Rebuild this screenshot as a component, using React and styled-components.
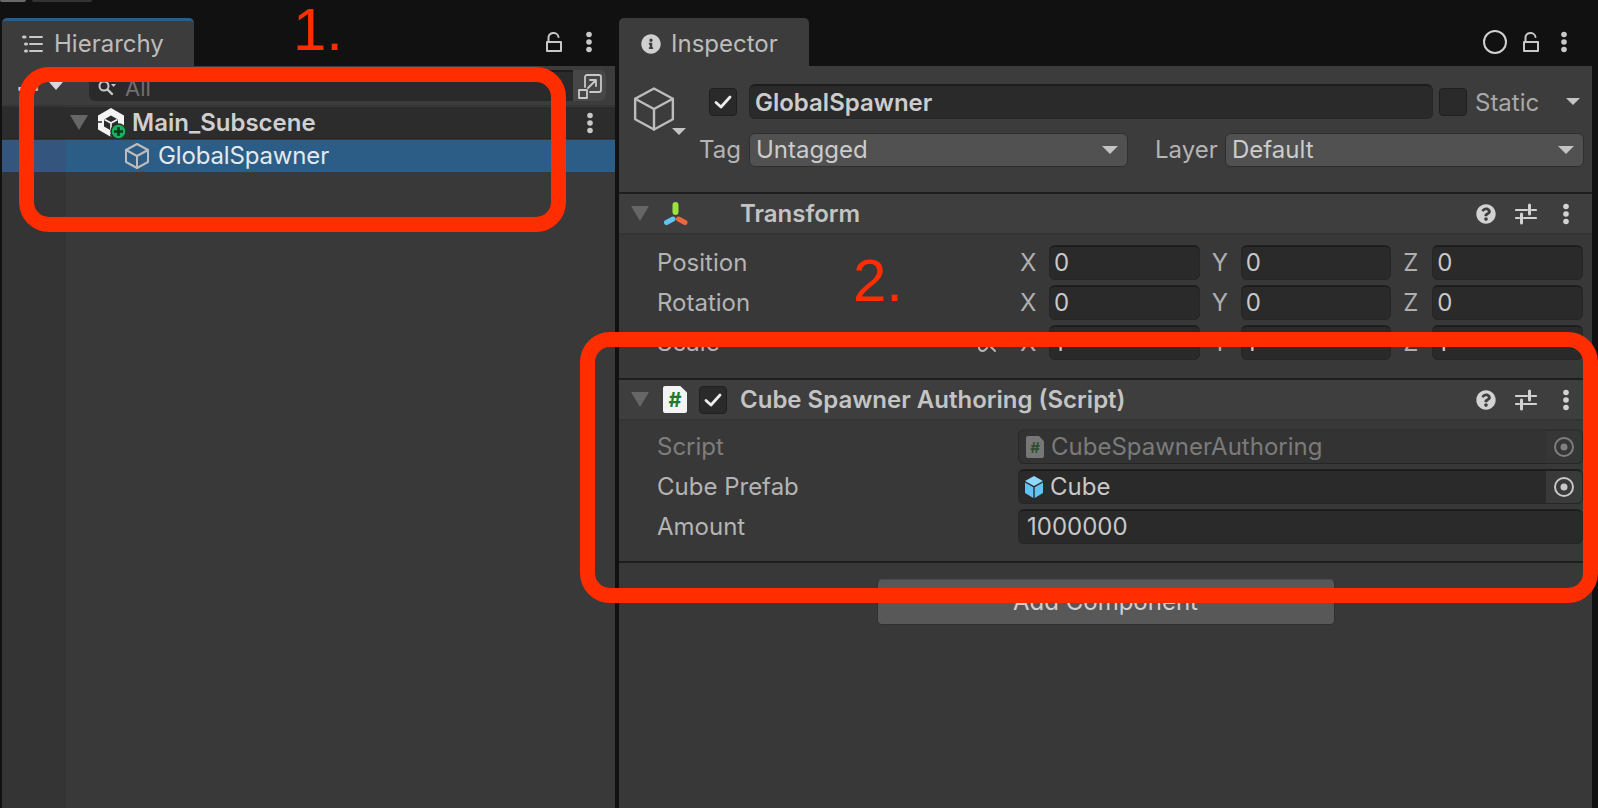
import React from "react";
import styled, { createGlobalStyle } from "styled-components";
import { FaInfoCircle, FaQuestionCircle } from "react-icons/fa";

const GlobalStyle = createGlobalStyle`
  html, body {
    margin: 0;
    height: 100%;
    background: #111111;
    overflow: hidden;
  }
  * { box-sizing: border-box; }
  #root { height: 100%; }
`;

const Page = styled.div`
  position: relative;
  width: 1598px;
  height: 808px;
  display: flex;
  gap: 4px;
  padding: 18px 6px 0 2px;
  font-family: Inter, "Noto Sans", sans-serif;
  font-size: 24px;
  line-height: 1;
  color: #c4c4c4;
  overflow: hidden;
`;

const WindowChrome = styled.div`
  position: absolute;
  top: 0;
  left: 0;
  display: flex;
  gap: 6px;
`;

const ChromeTab = styled.div`
  width: ${({ $w }) => $w}px;
  height: 2px;
  border-radius: 0 0 3px 3px;
  background: ${({ $light }) => ($light ? "#6a6a6a" : "#333333")};
`;

const Panel = styled.section`
  width: ${({ $w }) => $w}px;
  display: flex;
  flex-direction: column;
`;

const PanelHead = styled.header`
  height: 48px;
  flex: none;
  display: flex;
  align-items: center;
  justify-content: space-between;
`;

const Tab = styled.div`
  width: ${({ $w }) => $w}px;
  height: 48px;
  display: flex;
  align-items: center;
  gap: ${({ $gap }) => $gap}px;
  padding: ${({ $active }) => ($active ? "0" : "4px")} 0 0 ${({ $pad }) => $pad}px;
  background: #3c3c3c;
  border-radius: 5px 5px 0 0;
  border-top: ${({ $active }) => ($active ? "3px solid #2c5d87" : "0")};
  color: #bdbdbd;
`;

const HeadActions = styled.div`
  display: flex;
  align-items: center;
  gap: ${({ $gap }) => $gap}px;
  padding-right: ${({ $pad }) => $pad}px;
`;

const Tree = styled.div`
  flex: 1;
  background: linear-gradient(to right, #343434 64px, #393939 64px);
`;

const SearchBar = styled.div`
  height: 40px;
  display: flex;
  align-items: center;
  padding: 4px 9px 4px 14px;
  background: #3c3c3c;
  border-bottom: 1px solid #333333;
`;

const CreateMenu = styled.div`
  width: 73px;
  display: flex;
  align-items: center;
  gap: 9px;
  color: #d0d0d0;
`;

const PlusGlyph = styled.span`
  width: 24px;
  display: flex;
  justify-content: center;
  font-size: 40px;
  font-weight: 500;
`;

const SearchField = styled.div`
  flex: 1;
  height: 31px;
  display: flex;
  align-items: center;
  gap: 8px;
  padding: 3px 0 0 8px;
  background: #2a2a2a;
  border-radius: 6px 0 0 6px;
  border-top: 2px solid #1d1d1d;
  color: #6f6f6f;
  font-size: 22px;
`;

const SearchToggle = styled.div`
  width: 33px;
  height: 31px;
  display: flex;
  align-items: center;
  justify-content: center;
  background: #474747;
  border-radius: 0 6px 6px 0;
`;

const SceneRow = styled.div`
  height: 32px;
  margin-top: 1px;
  display: flex;
  align-items: center;
  justify-content: space-between;
  padding: 0 21px 0 68px;
  background: #2c2c2c;
  font-weight: 600;
  color: #cfcfcf;
  border-bottom: 1px solid #262626;
`;

const RowStart = styled.div`
  display: flex;
  align-items: center;
  gap: ${({ $gap }) => $gap}px;
`;

const SelectedRow = styled.div`
  height: 32px;
  margin-top: 1px;
  display: flex;
  align-items: center;
  gap: 7px;
  padding: 0 0 1px 121px;
  background: linear-gradient(to right, #34557d 64px, #2c5d87 64px);
  color: #e4e9ee;
  letter-spacing: -0.15px;
`;

const Inspector = styled.div`
  flex: 1;
  background: #383838;
`;

const ObjectHead = styled.div`
  height: 128px;
  display: flex;
  padding: 18px 8px 0 15px;
  background: #3c3c3c;
  border-bottom: 2px solid #1e1e1e;
`;

const ObjectIcon = styled.div`
  width: 65px;
  flex: none;
  display: flex;
  align-items: flex-start;
  padding-top: 1px;
`;

const ObjectCube = styled.span`
  margin-left: -4px;
  flex: none;
`;

const ObjectMenu = styled.span`
  flex: none;
  margin: 43px 0 0 -6px;
`;

const ObjectFields = styled.div`
  flex: 1;
  display: flex;
  flex-direction: column;
  gap: 14px;
`;

const ObjectRow = styled.div`
  display: flex;
  align-items: center;
  padding-left: ${({ $pad }) => $pad || 0}px;
`;

const CheckBox = styled.div`
  width: 28px;
  height: 28px;
  flex: none;
  display: flex;
  align-items: center;
  justify-content: center;
  background: #2a2a2a;
  border: 1px solid #1f1f1f;
  border-radius: 4px;
  margin: ${({ $margin }) => $margin || "0"};
`;

const NameField = styled.div`
  width: 684px;
  height: 35px;
  display: flex;
  align-items: center;
  padding: 2px 0 0 5px;
  background: #2a2a2a;
  border: 1px solid #262626;
  border-top: 2px solid #1c1c1c;
  border-radius: 6px;
  font-weight: 600;
  color: #cdcdcd;
`;

const StaticLabel = styled.span`
  width: 99px;
  padding: 2px 0 0 8px;
  color: #a9a9a9;
`;

const FieldLabel = styled.span`
  flex: none;
  width: ${({ $w }) => $w}px;
  margin-left: ${({ $ml }) => $ml || 0}px;
  color: ${({ $muted }) => ($muted ? "#7d7d7d" : "#b4b4b4")};
`;

const LabelCell = styled.div`
  display: flex;
  align-items: center;
  justify-content: space-between;
  padding-right: 21px;
`;

const Dropdown = styled.div`
  width: ${({ $w }) => $w}px;
  height: 34px;
  display: flex;
  align-items: center;
  justify-content: space-between;
  padding: 0 9px 0 6px;
  background: #515151;
  border: 1px solid #2f2f2f;
  border-radius: 6px;
  color: #cccccc;
`;

const Arrow = styled.span`
  display: block;
  width: 0;
  height: 0;
  flex: none;
  border-left: ${({ $s = 8 }) => $s}px solid transparent;
  border-right: ${({ $s = 8 }) => $s}px solid transparent;
  border-top: ${({ $h, $s = 8 }) => $h || $s}px solid ${({ $c = "#c4c4c4" }) => $c};
`;

const ComponentHead = styled.div`
  height: 41px;
  display: flex;
  align-items: center;
  padding: 0 22px 0 12px;
  background: #3e3e3e;
  border-bottom: 2px solid #343434;
  font-weight: 600;
  color: #c4c4c4;
`;

const HeadIcons = styled.div`
  width: 64px;
  flex: none;
  margin-left: 14px;
  display: flex;
  align-items: center;
  gap: 12px;
`;

const HeadTitle = styled.span`
  flex: 1;
  margin-left: 13px;
`;

const ComponentActions = styled.div`
  display: flex;
  align-items: center;
  gap: 19px;
  color: #d2d2d2;
`;

const MenuSlot = styled.span`
  margin-left: 6px;
`;

const ComponentBody = styled.div`
  display: flex;
  flex-direction: column;
  gap: 5px;
  padding: ${({ $pad }) => $pad};
  border-bottom: 2px solid #1e1e1e;
`;

const PropRow = styled.div`
  height: 35px;
  display: grid;
  grid-template-columns: 361px 565px;
  align-items: center;
  padding-left: 38px;
`;

const VectorFields = styled.div`
  display: flex;
  gap: 10px;
`;

const VectorAxis = styled.div`
  flex: 1;
  display: flex;
  align-items: center;
`;

const AxisLabel = styled.span`
  width: 31px;
  flex: none;
  padding-left: 2px;
  color: #b0b0b0;
`;

const ValueField = styled.div`
  flex: 1;
  height: 35px;
  display: flex;
  align-items: center;
  gap: ${({ $gap = 6 }) => $gap}px;
  padding-left: ${({ $pad = 4 }) => $pad}px;
  background: ${({ $disabled }) => ($disabled ? "#333333" : "#2a2a2a")};
  border: 1px solid #262626;
  border-top: 2px solid ${({ $disabled }) => ($disabled ? "#303030" : "#1e1e1e")};
  border-radius: 6px;
  color: ${({ $disabled }) => ($disabled ? "#7b7b7b" : "#c8c8c8")};
  overflow: hidden;
`;

const ObjectValue = styled.span`
  flex: 1;
`;

const Picker = styled.div`
  width: 36px;
  height: 100%;
  flex: none;
  display: flex;
  align-items: center;
  justify-content: center;
  background: ${({ $disabled }) => ($disabled ? "#363636" : "#3a3a3a")};
`;

const ScriptGlyph = styled.span`
  width: ${({ $w }) => $w}px;
  height: ${({ $h }) => $h}px;
  flex: none;
  display: flex;
  align-items: center;
  justify-content: center;
  background: ${({ $dim }) => ($dim ? "#777777" : "#f4f4f4")};
  clip-path: polygon(0 0, 72% 0, 100% 24%, 100% 100%, 0 100%);
  border-radius: 2px;
  font-weight: 700;
  font-size: ${({ $fs }) => $fs}px;
  color: ${({ $dim }) => ($dim ? "#2d4f2f" : "#1d7a2f")};
`;

const AddWrap = styled.div`
  display: flex;
  justify-content: center;
  padding-top: 16px;
`;

const AddButton = styled.div`
  width: 458px;
  height: 46px;
  display: flex;
  align-items: center;
  justify-content: center;
  background: #585858;
  border: 1px solid #303030;
  border-top-color: #4a4a4a;
  border-radius: 5px;
  color: #d0d0d0;
`;

/* the red marks lie over the screenshot, they are not part of the panels */
const Ring = styled.div`
  position: absolute;
  left: ${({ $x }) => $x}px;
  top: ${({ $y }) => $y}px;
  width: ${({ $w }) => $w}px;
  height: ${({ $h }) => $h}px;
  border: 15px solid #ff2d00;
  border-radius: 30px;
`;

const Mark = styled.span`
  position: absolute;
  left: ${({ $x }) => $x}px;
  top: ${({ $y }) => $y}px;
  font-family: "Liberation Sans", Arial, sans-serif;
  font-size: 60px;
  line-height: 1;
  color: #ff2d00;
`;

const Stroke = ({ w = 24, h = 24, vb, sw = 2, c = "#c8c8c8", children }) => (
  <svg
    width={w}
    height={h}
    viewBox={vb || `0 0 ${w} ${h}`}
    fill="none"
    stroke={c}
    strokeWidth={sw}
    strokeLinecap="round"
    strokeLinejoin="round"
    style={{ display: "block", flex: "none" }}
  >
    {children}
  </svg>
);

const ListIcon = () => (
  <Stroke w={22} h={20}>
    <path d="M8 3h12M8 10h12M8 17h12" />
    <path d="M1.500 3h1.500M3.500 10h1M3.500 17h1" strokeWidth="3" />
  </Stroke>
);

const LockIcon = () => (
  <Stroke w={18} h={22}>
    <rect x="2" y="11" width="14" height="9" />
    <path d="M3.500 11V7a5 4.500 0 0 1 10-1" />
  </Stroke>
);

const Kebab = ({ c = "#c8c8c8" }) => (
  <svg width="8" height="22" viewBox="0 0 8 22" style={{ display: "block", flex: "none" }}>
    <circle cx="4" cy="3.500" r="2.800" fill={c} />
    <circle cx="4" cy="11" r="2.800" fill={c} />
    <circle cx="4" cy="18.500" r="2.800" fill={c} />
  </svg>
);

const CubeIcon = ({ size = 28, sw = 2, c = "#bdbdbd" }) => (
  <Stroke w={size} h={size} vb="0 0 28 28" sw={sw} c={c}>
    <path d="M14 2 25 8v12l-11 6-11-6V8z" />
    <path d="M3 8l11 6 11-6M14 14v12" />
  </Stroke>
);

const SearchIcon = () => (
  <Stroke w={20} h={20} c="#c8c8c8">
    <circle cx="7" cy="8" r="4.500" />
    <path d="M10.500 11.500 15 16" strokeWidth="2.400" />
    <path d="M14 6h5l-2.500 3z" fill="#c8c8c8" strokeWidth="0" />
  </Stroke>
);

const ToggleIcon = () => (
  <Stroke w={26} h={28} sw={1.800}>
    <path d="M8 15V5a2 2 0 0 1 2-2h12a2 2 0 0 1 2 2v13a2 2 0 0 1-2 2h-9" />
    <rect x="2" y="18" width="8" height="8" />
    <path d="M11 16l8-8M13 8h6v6" />
  </Stroke>
);

const SceneIcon = () => (
  <svg width="30" height="32" viewBox="0 0 30 32" style={{ display: "block", flex: "none" }}>
    <path d="M13 1 26 8.500v14L13 30 0 22.500v-14z" fill="#f4f4f4" />
    <path d="M13 8.500 20 12.500v7l-7 4-7-4v-7z" fill="#2c2c2c" />
    <path d="M6.500 12.500 13 16l6.500-3.500M13 16v7" stroke="#f4f4f4" strokeWidth="1.600" fill="none" />
    <path d="M0 15h4M13 30v-3" stroke="#2c2c2c" strokeWidth="1.500" />
    <circle cx="20.500" cy="24.500" r="7.500" fill="#17b35c" stroke="#20362a" strokeWidth="1.500" />
    <path d="M20.500 20v9M16 24.500h9" stroke="#12331f" strokeWidth="2.600" />
  </svg>
);

const CheckMark = () => (
  <Stroke w={18} h={16} sw={2.800} c="#ececec">
    <path d="M2 8.500 7 13 16 3" />
  </Stroke>
);

const TransformIcon = () => (
  <svg width="26" height="24" viewBox="0 0 26 24" style={{ display: "block", flex: "none" }}>
    <path d="M12.500 3v7" stroke="#9be23a" strokeWidth="6" strokeLinecap="round" />
    <path d="M3.500 20.500 10 17" stroke="#62c4f2" strokeWidth="5" strokeLinecap="round" />
    <path d="M15.500 17l6.500 3.500" stroke="#f0673c" strokeWidth="5" strokeLinecap="round" />
  </svg>
);

const SlidersIcon = () => (
  <Stroke w={22} h={22} sw={2.200} c="#d2d2d2">
    <path d="M1 7h11M17 7h4M1 15h3M9 15h12" />
    <path d="M14.500 2v9M6.500 11v9" strokeWidth="3" />
  </Stroke>
);

const TargetIcon = ({ c = "#c8c8c8" }) => (
  <svg width="22" height="22" viewBox="0 0 22 22" style={{ display: "block" }}>
    <circle cx="11" cy="11" r="9" fill="none" stroke={c} strokeWidth="2" />
    <circle cx="11" cy="11" r="3.500" fill={c} />
  </svg>
);

const PrefabIcon = () => (
  <svg width="20" height="24" viewBox="0 0 20 24" style={{ display: "block", flex: "none" }}>
    <path d="M10 1 19 6l-9 5-9-5z" fill="#8fd8fb" />
    <path d="M1 7.500l8.300 4.700V23L1 18z" fill="#62c3f2" />
    <path d="M19 7.500l-8.300 4.700V23L19 18z" fill="#62c3f2" />
  </svg>
);

const CircleOutline = () => (
  <svg width="26" height="26" viewBox="0 0 26 26" style={{ display: "block" }}>
    <circle cx="13" cy="13" r="11" fill="none" stroke="#d0d0d0" strokeWidth="2" />
  </svg>
);

const LinkIcon = () => (
  <Stroke w={20} h={20} c="#b4b4b4">
    <path d="M8 5l2-2a3.500 3.500 0 0 1 5 5l-2 2" />
    <path d="M10 15l-2 2a3.500 3.500 0 0 1-5-5l2-2" />
    <path d="M3 3l15 15" />
  </Stroke>
);

const vectorRows = [
  { label: "Position", value: "0" },
  { label: "Rotation", value: "0" },
  { label: "Scale", value: "1", linked: true },
];

const Hierarchy = () => (
  <Panel $w={613}>
    <PanelHead>
      <Tab $w={192} $pad={20} $gap={10} $active>
        <ListIcon />
        Hierarchy
      </Tab>
      <HeadActions $gap={22} $pad={22}>
        <LockIcon />
        <Kebab />
      </HeadActions>
    </PanelHead>
    <SearchBar>
      <CreateMenu>
        <PlusGlyph>+</PlusGlyph>
        <Arrow $s={7} $h={8} $c="#d8d8d8" />
      </CreateMenu>
      <SearchField>
        <SearchIcon />
        All
      </SearchField>
      <SearchToggle>
        <ToggleIcon />
      </SearchToggle>
    </SearchBar>
    <Tree>
      <SceneRow>
        <RowStart $gap={10}>
          <Arrow $s={9} $h={15} $c="#666666" />
          <RowStart $gap={4}>
            <SceneIcon />
            Main_Subscene
          </RowStart>
        </RowStart>
        <Kebab />
      </SceneRow>
      <SelectedRow>
        <CubeIcon />
        GlobalSpawner
      </SelectedRow>
    </Tree>
  </Panel>
);

const ComponentMenu = () => (
  <ComponentActions>
    <FaQuestionCircle size={20} />
    <SlidersIcon />
    <MenuSlot>
      <Kebab c="#d2d2d2" />
    </MenuSlot>
  </ComponentActions>
);

const InspectorPanel = () => (
  <Panel $w={973}>
    <PanelHead>
      <Tab $w={190} $pad={22} $gap={10}>
        <FaInfoCircle size={20} color="#cfcfcf" />
        Inspector
      </Tab>
      <HeadActions $gap={14} $pad={24}>
        <CircleOutline />
        <LockIcon />
        <MenuSlot>
          <Kebab />
        </MenuSlot>
      </HeadActions>
    </PanelHead>
    <Inspector>
      <ObjectHead>
        <ObjectIcon>
          <ObjectCube>
            <CubeIcon size={48} sw={1.400} />
          </ObjectCube>
          <ObjectMenu>
            <Arrow $s={7} />
          </ObjectMenu>
        </ObjectIcon>
        <ObjectFields>
          <ObjectRow $pad={10}>
            <CheckBox $margin="0 12px 0 0">
              <CheckMark />
            </CheckBox>
            <NameField>GlobalSpawner</NameField>
            <CheckBox $margin="0 0 0 6px" />
            <StaticLabel>Static</StaticLabel>
            <Arrow $s={7} />
          </ObjectRow>
          <ObjectRow>
            <FieldLabel $w={50}>Tag</FieldLabel>
            <Dropdown $w={379}>
              Untagged
              <Arrow $s={8} />
            </Dropdown>
            <FieldLabel $w={70} $ml={27}>
              Layer
            </FieldLabel>
            <Dropdown $w={359}>
              Default
              <Arrow $s={8} />
            </Dropdown>
          </ObjectRow>
        </ObjectFields>
      </ObjectHead>

      <ComponentHead>
        <Arrow $s={9} $h={15} $c="#666666" />
        <HeadIcons>
          <TransformIcon />
        </HeadIcons>
        <HeadTitle>Transform</HeadTitle>
        <ComponentMenu />
      </ComponentHead>
      <ComponentBody $pad="10px 0 18px">
        {vectorRows.map((row) => (
          <PropRow key={row.label}>
            <LabelCell>
              <FieldLabel>{row.label}</FieldLabel>
              {row.linked && <LinkIcon />}
            </LabelCell>
            <VectorFields>
              {["X", "Y", "Z"].map((axis) => (
                <VectorAxis key={axis}>
                  <AxisLabel>{axis}</AxisLabel>
                  <ValueField>{row.value}</ValueField>
                </VectorAxis>
              ))}
            </VectorFields>
          </PropRow>
        ))}
      </ComponentBody>

      <ComponentHead>
        <Arrow $s={9} $h={15} $c="#666666" />
        <HeadIcons>
          <ScriptGlyph $w={24} $h={27} $fs={20}>
            #
          </ScriptGlyph>
          <CheckBox>
            <CheckMark />
          </CheckBox>
        </HeadIcons>
        <HeadTitle>Cube Spawner Authoring (Script)</HeadTitle>
        <ComponentMenu />
      </ComponentHead>
      <ComponentBody $pad="8px 0 17px">
        <PropRow>
          <FieldLabel $muted>Script</FieldLabel>
          <ValueField $disabled $pad={7} $gap={7}>
            <ScriptGlyph $w={18} $h={22} $fs={15} $dim>
              #
            </ScriptGlyph>
            <ObjectValue>CubeSpawnerAuthoring</ObjectValue>
            <Picker $disabled>
              <TargetIcon c="#7f7f7f" />
            </Picker>
          </ValueField>
        </PropRow>
        <PropRow>
          <FieldLabel>Cube Prefab</FieldLabel>
          <ValueField $pad={5}>
            <PrefabIcon />
            <ObjectValue>Cube</ObjectValue>
            <Picker>
              <TargetIcon />
            </Picker>
          </ValueField>
        </PropRow>
        <PropRow>
          <FieldLabel>Amount</FieldLabel>
          <ValueField $pad={8}>1000000</ValueField>
        </PropRow>
      </ComponentBody>

      <AddWrap>
        <AddButton>Add Component</AddButton>
      </AddWrap>
    </Inspector>
  </Panel>
);

export default function App() {
  return (
    <>
      <GlobalStyle />
      <Page>
        <WindowChrome>
          <ChromeTab $w={26} $light />
          <ChromeTab $w={60} />
        </WindowChrome>
        <Hierarchy />
        <InspectorPanel />
        <Ring $x={19} $y={67} $w={547} $h={165} />
        <Ring $x={580} $y={332} $w={1018} $h={271} />
        <Mark $x={293} $y={0}>
          1.
        </Mark>
        <Mark $x={853} $y={251}>
          2.
        </Mark>
      </Page>
    </>
  );
}
